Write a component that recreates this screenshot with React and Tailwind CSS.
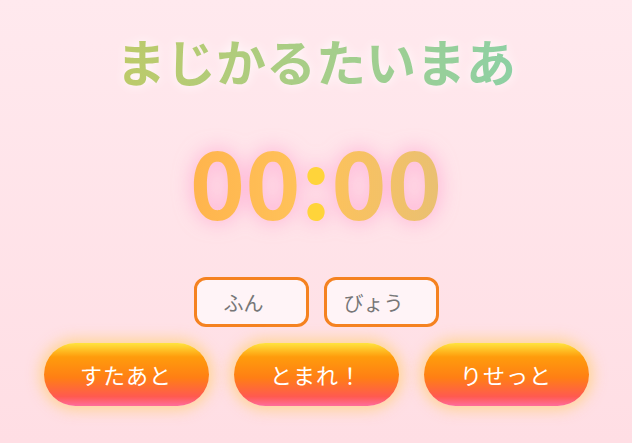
import React, { useState } from 'react';

export default function App() {
  const [min, setMin] = useState('');
  const [sec, setSec] = useState('');

  return (
    <div className="min-h-screen w-full bg-gradient-to-b from-[#ffe9ee] to-[#ffdee4] flex flex-col items-center font-['Noto_Sans_CJK_JP',sans-serif]">
      <h1 className="mt-[30px] text-[50px] leading-[1.2] font-bold bg-gradient-to-r from-[#bdca68] to-[#8dd0a4] bg-clip-text text-transparent drop-shadow-[0_0_6px_rgba(255,255,255,0.9)]">
        まじかるたいまあ
      </h1>

      <div className="mt-[42px] text-[94px] leading-none font-bold drop-shadow-[0_0_10px_rgba(255,120,190,0.55)]">
        <span className="bg-gradient-to-r from-[#ffb44c] to-[#ffc25a] bg-clip-text text-transparent">00</span>
        <span className="text-[#ffd43a]">:</span>
        <span className="bg-gradient-to-r from-[#fcc25c] to-[#e9c072] bg-clip-text text-transparent">00</span>
      </div>

      <div className="mt-[51px] flex gap-[15px]">
        <input
          type="number"
          value={min}
          onChange={e => setMin(e.target.value)}
          placeholder="ふん"
          className="w-[115px] h-[50px] rounded-[12px] border-[3px] border-[#f58220] bg-[#fff4f7] text-center text-[20px] text-[#555] placeholder:text-[#777] outline-none"
        />
        <input
          type="number"
          value={sec}
          onChange={e => setSec(e.target.value)}
          placeholder="びょう"
          className="w-[115px] h-[50px] rounded-[12px] border-[3px] border-[#f58220] bg-[#fff4f7] text-center text-[20px] text-[#555] placeholder:text-[#777] outline-none"
        />
      </div>

      <div className="mt-[16px] flex gap-[25px]">
        {['すたあと', 'とまれ！', 'りせっと'].map(label => (
          <button
            key={label}
            className="w-[165px] h-[63px] rounded-full bg-[linear-gradient(180deg,#ffe43e_0%,#ff9c0c_22%,#ff7f14_55%,#ff5a50_85%,#ff6c9c_100%)] text-white text-[22px] tracking-[1px] font-normal shadow-[0_0_14px_4px_rgba(255,210,130,0.8)]"
          >
            {label}
          </button>
        ))}
      </div>
    </div>
  );
}
